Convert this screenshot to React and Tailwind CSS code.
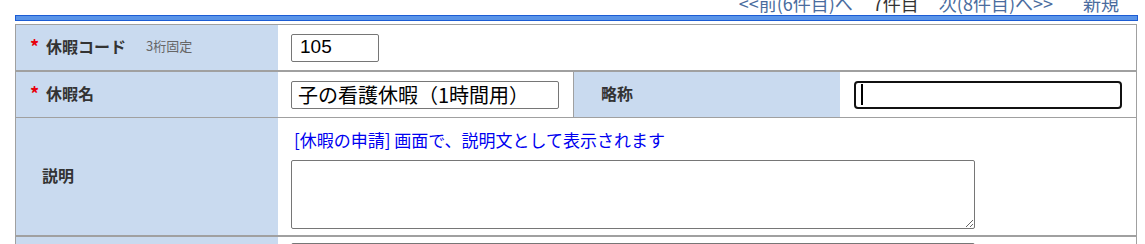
export default function App() {
  const label = "bg-[#c9daef] w-[262px] flex items-center pb-[3px] text-[16px] font-bold text-[#333]";
  const star = <span className="w-[16px] text-[18px] leading-none text-[#e8000b]">*</span>;

  return (
    <div className="min-h-screen bg-white font-['Noto_Sans_CJK_JP',sans-serif]">
      <div className="ml-[15px] w-[1123px]">
        {/* ページ送り */}
        <nav className="-mt-[8px] flex h-[23px] items-center justify-end gap-[20px] pr-[19px] text-[18px] leading-[23px] text-[#4a6c9e]">
          <a href="#">&lt;&lt;前(6件目)へ</a>
          <span className="text-[#333]">7件目</span>
          <a href="#">次(8件目)へ&gt;&gt;</a>
          <a href="#" className="ml-[10px]">新規</a>
        </nav>
        <div className="h-[6px] border border-[#1c5cd4] bg-[#5a94e8]" />

        <div className="mt-[3px] w-[1122px] border-l border-r border-t border-[#a0a0a0]">
          {/* 休暇コード */}
          <div className="flex h-[47px] border-b-2 border-[#a0a0a0]">
            <div className={label + " pl-[14px]"}>
              {star}
              <span>休暇コード</span>
              <span className="ml-[20px] text-[13px] font-normal text-[#666]">3桁固定</span>
            </div>
            <div className="flex flex-1 items-center pl-[13px]">
              <input
                defaultValue="105"
                className="h-[28px] w-[88px] rounded-[2px] border border-[#767676] px-[8px] font-['Liberation_Sans',sans-serif] text-[19px] text-black"
              />
            </div>
          </div>

          {/* 休暇名 / 略称 */}
          <div className="flex h-[46px] border-b border-[#a0a0a0]">
            <div className={label + " pl-[14px]"}>
              {star}
              <span>休暇名</span>
            </div>
            <div className="flex w-[295px] items-center pl-[13px]">
              <input
                defaultValue="子の看護休暇（1時間用）"
                className="h-[28px] w-[268px] rounded-[2px] border border-[#767676] px-[6px] text-[20px] leading-none text-black"
              />
            </div>
            <div className={label + " w-[267px] border-l border-[#a0a0a0] pl-[27px]"}>略称</div>
            <div className="flex flex-1 items-center pl-[14px]">
              <div className="flex h-[28px] w-[268px] items-center rounded-[4px] border-2 border-[#111] pl-[5px]">
                <span className="h-[21px] w-[2px] bg-black" />
              </div>
            </div>
          </div>

          {/* 説明 */}
          <div className="flex h-[119px] border-b-2 border-[#a0a0a0]">
            <div className={label + " pl-[26px]"}>説明</div>
            <div className="flex flex-1 flex-col pl-[13px] pt-[9px]">
              <p className="pl-[3px] text-[17px] leading-[26px] text-[#0000f0]">[休暇の申請] 画面で、説明文として表示されます</p>
              <textarea className="mt-[7px] h-[69px] w-[684px] rounded-[2px] border border-[#767676]" />
            </div>
          </div>

          <div className="flex h-[46px] border-b border-[#a0a0a0]">
            <div className={label + " pl-[26px]"}>備考</div>
            <div className="flex-1 pl-[13px] pt-[6px]">
              <input className="h-[28px] w-[684px] rounded-[2px] border border-[#767676]" />
            </div>
          </div>
        </div>
      </div>
    </div>
  );
}
